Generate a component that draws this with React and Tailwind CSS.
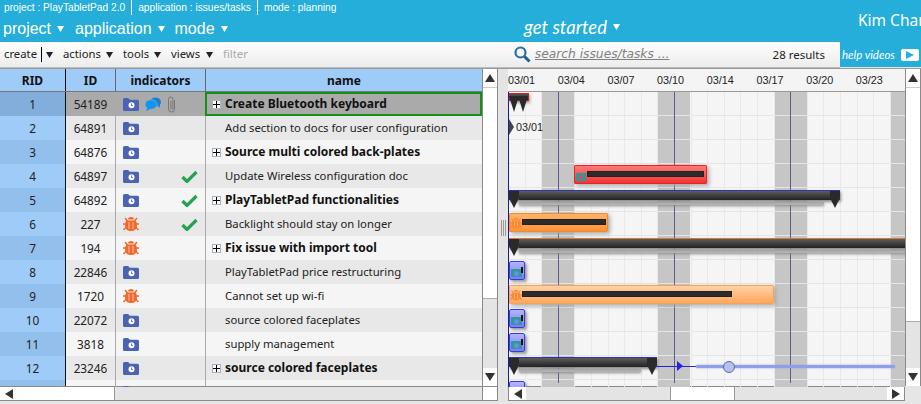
import React from "react";

const Caret = ({ className = "" }) => (
  <svg width="7" height="6" viewBox="0 0 7 6" className={`inline-block shrink-0 ${className}`}><path d="M0 0h7L3.5 6z" fill="currentColor" /></svg>
);

const Folder = () => (
  <svg width="16" height="13" viewBox="0 0 16 13" className="block">
    <path d="M0 1.5Q0 0 1.5 0H5l2 1.8h7.5Q16 1.8 16 3.3v8.2q0 1.5-1.5 1.5h-13Q0 13 0 11.5z" fill="#4a63b5" />
    <circle cx="8.5" cy="7.3" r="3" fill="#fff" />
    <path d="M8.5 5.5v2h1.4" stroke="#4a63b5" strokeWidth="0.9" fill="none" />
  </svg>
);

const Bug = ({ color = "#f4672b", stripe = "#fbc3a5", size = 16 }) => (
  <svg width={size} height={size} viewBox="0 0 16 16" className="block">
    <path d="M5 3.5Q5 1 8 1t3 2.5zM3.5 4.5h9Q14 6 14 9q0 6-6 6t-6-6q0-3 1.5-4.500z" fill={color} />
    <path d="M2 2l2.500 3M14 2l-2.500 3M0 8h3M16 8h-3M0.500 14l3-3M15.500 14l-3-3" stroke={color} strokeWidth="1.500" fill="none" />
    <path d="M6 6v7M10 6v7" stroke={stripe} strokeWidth="1" />
  </svg>
);

const Check = () => (
  <svg width="17" height="13" viewBox="0 0 17 13" className="block">
    <path d="M1.500 7l4.500 4.500L15.500 2" stroke="#25a24f" strokeWidth="3.200" fill="none" />
  </svg>
);

const Bubbles = () => (
  <svg width="16" height="14" viewBox="0 0 16 14" className="block">
    <ellipse cx="10.500" cy="5" rx="5.500" ry="4.500" fill="#1b7fd9" />
    <path d="M12 8l3 3-.5-5z" fill="#1b7fd9" />
    <ellipse cx="6" cy="7.500" rx="6" ry="4.800" fill="#0f95f7" stroke="#aaa" strokeWidth="0.700" />
    <path d="M2.500 10.500L1 14l5-2.500z" fill="#0f95f7" />
  </svg>
);

const Clip = () => (
  <svg width="9" height="17" viewBox="0 0 9 17" className="block">
    <path d="M7.500 4v9q0 3-3 3t-3-3V3.500q0-2.500 2.200-2.500t2.200 2.500V12q0 1-1 1t-1-1V5" stroke="#777" strokeWidth="1" fill="none" />
  </svg>
);

const Plus = () => (
  <span className="w-[9px] h-[9px] bg-white border border-[#a8b4c4] flex items-center justify-center shrink-0">
    <svg width="7" height="7" viewBox="0 0 7 7" className="block"><path d="M3.500 0v7M0 3.500h7" stroke="#000" strokeWidth="1" /></svg>
  </span>
);

const rows = [
  { rid: 1, id: 54189, icon: "f", extra: true, name: "Create Bluetooth keyboard", bold: true },
  { rid: 2, id: 64891, icon: "f", name: "Add section to docs for user configuration" },
  { rid: 3, id: 64876, icon: "f", name: "Source multi colored back-plates", bold: true },
  { rid: 4, id: 64897, icon: "f", check: true, name: "Update Wireless configuration doc" },
  { rid: 5, id: 64892, icon: "f", check: true, name: "PlayTabletPad functionalities", bold: true },
  { rid: 6, id: 227, icon: "b", check: true, name: "Backlight should stay on longer" },
  { rid: 7, id: 194, icon: "b", name: "Fix issue with import tool", bold: true },
  { rid: 8, id: 22846, icon: "f", name: "PlayTabletPad price restructuring" },
  { rid: 9, id: 1720, icon: "b", name: "Cannot set up wi-fi" },
  { rid: 10, id: 22072, icon: "f", name: "source colored faceplates" },
  { rid: 11, id: 3818, icon: "f", name: "supply management" },
  { rid: 12, id: 23246, icon: "f", name: "source colored faceplates", bold: true },
  { rid: 13, id: "", icon: "f", name: "" },
];

const Arrow = ({ dir }) => {
  const d = { up: "M0 8L5 0l5 8z", down: "M0 0h10L5 8z", left: "M8 0v10L0 5z", right: "M0 0v10l8-5z" }[dir];
  const horizontal = dir === "left" || dir === "right";
  return (
    <div className={`${horizontal ? "w-[17px] h-full" : "h-[18px] w-full"} bg-white flex items-center justify-center shrink-0`}>
      <svg width={horizontal ? 8 : 10} height={horizontal ? 10 : 8} className="block"><path d={d} fill="#333" /></svg>
    </div>
  );
};

const VScroll = ({ thumb }) => (
  <div className="w-[16px] h-full flex flex-col bg-[#e4e4e4] border-x border-[#8a8a8a] shrink-0">
    <Arrow dir="up" />
    <div className="bg-white border-t border-[#ccc] border-b border-b-[#aaa] shrink-0" style={{ height: thumb }} />
    <div className="flex-1" />
    <Arrow dir="down" />
  </div>
);

const days = ["03/01", "03/04", "03/07", "03/10", "03/14", "03/17", "03/20", "03/23"];
const DAY = 16.6;

const Summary = ({ left, top, width, border = "#2a35b0" }) => (
  <div className="absolute" style={{ left, top, width, height: 24 }}>
    <div className="absolute left-[10px] top-[13px] h-[3px] bg-[#b4b4b4] shadow-[0_1px_3px_#888]" style={{ width: width - 26 }} />
    <div className="absolute left-0 right-0 top-[1px] h-[10px] bg-gradient-to-b from-[#5e5e5e] to-[#222] border-t border-x shadow-[1px_2px_3px_#888]" style={{ borderColor: border }} />
    <div className="absolute left-[9px] top-[2px] w-px h-[9px] bg-[#666]" />
    <svg width="10" height="17" className="absolute left-0 top-[2px]"><path d="M0 0h10v7L5 17 0 7z" fill="#2a2a2a" /></svg>
    <svg width="10" height="17" className="absolute right-0 top-[2px]"><path d="M0 0h10v7L5 17 0 7z" fill="#2a2a2a" /></svg>
  </div>
);

const Bar = ({ left, top, width, inner, bg, border, children }) => (
  <div className={`absolute h-[19px] border rounded-[1px] shadow-[2px_2px_4px_#aaa] ${bg} ${border}`} style={{ left, top, width }}>
    {children}
    <div className="absolute left-[12px] top-[5px] h-[6px] bg-[#2c2c2c] border border-[#222]" style={{ width: inner }} />
  </div>
);

const BlueTask = ({ top, tall = 19 }) => (
  <div className="absolute left-0 w-[16px] bg-gradient-to-b from-[#b4b4fa] to-[#7c7cf2] border border-[#3a3ae4] rounded-[2px] shadow-[2px_2px_3px_#999]" style={{ top, height: tall }}>
    <div className="absolute left-[1px] top-[7px] w-[11px] h-[8px] bg-[#2a9aa0] flex items-center justify-center">
      <div className="w-[5px] h-[5px] rounded-full bg-[#6f8de0]" />
    </div>
    <div className="absolute right-[1px] top-[5px] w-[2px] h-[6px] bg-[#111]" />
  </div>
);

export default function App() {
  return (
    <div className="w-[921px] h-[404px] overflow-hidden flex flex-col bg-[#e6e6e6] text-[11.300px] text-[#222] font-['Noto_Sans','DejaVu_Sans',sans-serif]">
      {/* Blue header */}
      <div className="h-[42px] bg-[#24aed9] text-white flex justify-between shrink-0 overflow-hidden">
        <div className="pl-[4px] flex flex-col font-['Liberation_Sans',sans-serif] w-[360px] shrink-0">
          <div className="flex items-center h-[15px] text-[10.200px] leading-[15px] whitespace-nowrap">
            <span>project : PlayTabletPad 2.0</span>
            <span className="w-px h-[15px] bg-white mx-[6px] shrink-0" />
            <span>application : issues/tasks</span>
            <span className="w-px h-[15px] bg-white mx-[6px] shrink-0" />
            <span>mode : planning</span>
          </div>
          <div className="flex items-center mt-[2px] -ml-[1px] text-[16px] leading-[23px]">
            <span>project</span><Caret className="ml-[6px] mr-[11px]" />
            <span>application</span><Caret className="ml-[6px] mr-[10px]" />
            <span>mode</span><Caret className="ml-[6px]" />
          </div>
        </div>
        <div className="flex-1 flex items-start">
          <div className="ml-[164px] mt-[15px] flex items-center text-[18.500px] leading-[24px] italic font-['Lato',sans-serif] whitespace-nowrap">
            get started<Caret className="ml-[6px]" />
          </div>
          <div className="ml-auto mt-[9px] text-[15.500px] leading-[22px] whitespace-nowrap w-[63px] overflow-hidden">Kim Chan</div>
        </div>
      </div>

      {/* Toolbar */}
      <div className="h-[26px] flex shrink-0">
        <div className="flex-1 flex items-center bg-gradient-to-b from-white to-[#ececec] border-b border-b-[#bbb] pl-[4px] text-[#222] whitespace-nowrap">
          <span className="w-[37px]">create</span>
          <span className="w-px h-[15px] bg-black" />
          <Caret className="ml-[4px]" />
          <span className="ml-[10px] w-[43px]">actions</span><Caret />
          <span className="ml-[10px] w-[31px]">tools</span><Caret />
          <span className="ml-[10px] w-[35px]">views</span><Caret />
          <span className="ml-[10px] text-[#aaa]">filter</span>
          <svg width="17" height="17" viewBox="0 0 17 17" className="ml-[266px] mr-[4px] block shrink-0">
            <circle cx="6.500" cy="6.500" r="5" stroke="#2a6da8" strokeWidth="2.200" fill="none" />
            <path d="M10.500 10.500l5 5" stroke="#1f5f97" strokeWidth="3" />
          </svg>
          <span className="italic underline text-[#808080] text-[12.250px] font-['DejaVu_Sans',sans-serif]">search issues/tasks ...</span>
          <span className="ml-auto mr-[15px] text-[#222] text-[11.500px]">28 results</span>
        </div>
        <div className="w-[81px] bg-[#24aed9] h-[25px] text-white flex items-center pl-[2px] text-[11.500px] italic font-['Lato',sans-serif] whitespace-nowrap">
          help videos
          <span className="ml-[6px] w-[18px] h-[12px] bg-white rounded-[2px] flex items-center justify-center">
            <svg width="8" height="8" className="block"><path d="M0 0l8 4-8 4z" fill="#24aed9" /></svg>
          </span>
        </div>
      </div>

      {/* Main */}
      <div className="h-[334px] flex shrink-0 border-t border-[#999]">
        {/* Table */}
        <div className="w-[498px] h-full flex flex-col shrink-0">
          <div className="flex-1 min-h-0 flex">
            <div className="w-[482px] h-[318px] overflow-hidden">
              <div className="flex h-[23px] bg-[#9fcbf8] font-bold text-[12px] text-[#111] border-b border-[#777]">
                <div className="w-[65px] text-center leading-[23px]">RID</div>
                <div className="w-[50px] text-center leading-[23px] border-l border-[#111]">ID</div>
                <div className="w-[90px] text-center leading-[23px] border-l border-[#667]">indicators</div>
                <div className="flex-1 text-center leading-[23px] border-l border-[#667]">name</div>
              </div>
              {rows.map((r) => {
                const sel = r.rid === 1;
                const even = r.rid % 2 === 0;
                return (
                  <div key={r.rid} className={`flex h-[24px] ${sel ? "bg-[#aaaaaa]" : even ? "bg-[#e8e8e8]" : "bg-[#f5f5f5]"}`}>
                    <div className={`w-[65px] text-center text-[11.800px] leading-[24px] ${sel ? "bg-[#83aedb]" : even ? "bg-[#9fcbf8]" : "bg-[#93bfec]"}`}>{r.rid}</div>
                    <div className="w-[50px] text-center text-[11.800px] leading-[24px] border-l border-[#111]">{r.id}</div>
                    <div className="w-[90px] border-l border-[#aaa] flex items-center pl-[7px] relative">
                      {r.icon === "f" ? <Folder /> : <Bug />}
                      {r.extra && <span className="ml-[6px]"><Bubbles /></span>}
                      {r.extra && <span className="ml-[6px]"><Clip /></span>}
                      {r.check && <span className="ml-auto mr-[7px]"><Check /></span>}
                    </div>
                    <div className={`flex-1 flex items-center whitespace-nowrap ${sel ? "border-2 border-[#159017] pl-[5px]" : "border-l border-[#aaa] pl-[6px]"} ${r.bold ? "font-bold text-[12px] text-[#111]" : ""}`}>
                      <span className="w-[13px] shrink-0">{r.bold && <Plus />}</span>
                      <span>{r.name}</span>
                    </div>
                  </div>
                );
              })}
            </div>
            <VScroll thumb={212} />
          </div>
          <div className="h-[15px] flex bg-[#e4e4e4] border-y border-[#8a8a8a] shrink-0 mb-[1px]">
            <Arrow dir="left" />
            <div className="w-[98px] bg-white border-r border-[#999]" />
            <div className="flex-1" />
            <div className="w-[16px] bg-white border-x border-[#8a8a8a]" />
          </div>
        </div>

        {/* Splitter */}
        <div className="w-[10px] h-full flex items-center justify-center bg-[#e4e4e4] shrink-0">
          <div className="w-[5px] h-[16px] mb-[16px] border-x border-[#999] flex justify-center"><div className="w-px bg-[#999]" /></div>
        </div>

        {/* Gantt */}
        <div className="w-[413px] h-full flex flex-col">
          <div className="flex-1 min-h-0 flex">
            <div className="w-[397px] h-[318px] flex flex-col overflow-hidden bg-[#f5f5f5]">
              <div className="h-[23px] flex bg-[#f4f4f4] border-b border-[#999] shrink-0 text-[#222] text-[10.800px] font-['Liberation_Sans',sans-serif]">
                {days.map((d) => (
                  <div key={d} className="w-[49.700px] leading-[23px] shrink-0">{d}</div>
                ))}
              </div>
              <div className="relative flex-1 border-l border-[#1a1a9a] overflow-hidden bg-[repeating-linear-gradient(to_right,transparent_0,transparent_15.600px,#e9e9e9_15.600px,#e9e9e9_16.600px)]">
                {[2, 9, 16, 23].map((k) => (
                  <div key={k} className="absolute top-0 bottom-0 w-[32px] bg-[#c6c6c6]" style={{ left: k * DAY }} />
                ))}
                <div className="absolute inset-0 bg-[repeating-linear-gradient(to_bottom,transparent_0,transparent_23px,#e6e6e6_23px,#e6e6e6_24px)]" />
                {[3, 10, 17].map((k) => (
                  <div key={k} className="absolute top-0 bottom-[4px] w-px bg-[#5d5d8c]" style={{ left: k * DAY - 1 }} />
                ))}
                {/* Row 1 */}
                <div className="absolute left-0 top-[1px] w-[20px] h-[8px] border border-[#e01818] bg-gradient-to-b from-[#555] to-[#222] shadow-[1px_2px_3px_#999]" />
                <svg width="20" height="20" className="absolute left-0 top-[2px]"><path d="M0 2h10L5 18zM9 2h10L14 18z" fill="#2a2a2a" /></svg>
                {/* Row 2 */}
                <svg width="6" height="16" className="absolute left-0 top-[27px]"><path d="M0 0l5 8-5 8z" fill="#444" /></svg>
                <span className="absolute left-[7px] top-[27px] text-[10.800px] leading-[17px] font-['Liberation_Sans',sans-serif]">03/01</span>
                {/* Row 4 */}
                <Bar left={65} top={73} width={133} inner={117} bg="bg-gradient-to-b from-[#f77] to-[#ee3535]" border="border-[#e22]">
                  <div className="absolute left-[1px] top-[7px] w-[10px] h-[8px] bg-[#2a9aa0]"><div className="w-[4px] h-[4px] mt-[2px] ml-[3px] rounded-full bg-[#e44]" /></div>
                </Bar>
                {/* Row 5 */}
                <Summary left={0} top={97} width={331} />
                {/* Row 6 */}
                <Bar left={0} top={121} width={99} inner={84} bg="bg-gradient-to-b from-[#ffb36b] to-[#ff9432]" border="border-[#f08a2e]">
                  <div className="absolute left-[0px] top-[3px]"><Bug color="#f78a32" stripe="#ffb36b" size={12} /></div>
                </Bar>
                {/* Row 7 */}
                <Summary left={0} top={145} width={420} border="#d9772e" />
                {/* Row 8 */}
                <BlueTask top={169} />
                {/* Row 9 */}
                <Bar left={0} top={193} width={265} inner={210} bg="bg-gradient-to-b from-[#ffd0a4] to-[#ffa75c]" border="border-[#f4a25a]">
                  <div className="absolute left-[0px] top-[3px]"><Bug color="#f78a32" stripe="#ffc08a" size={12} /></div>
                </Bar>
                {/* Rows 10, 11 */}
                <BlueTask top={217} />
                <BlueTask top={241} />
                {/* Row 12 */}
                <Summary left={0} top={264} width={148} />
                <div className="absolute left-[148px] top-[274px] w-[40px] h-px bg-[#2222e0]" />
                <svg width="6" height="10" className="absolute left-[168px] top-[269px]"><path d="M0 0l6 5-6 5z" fill="#2222e0" /></svg>
                <div className="absolute left-[187px] top-[273px] w-[199px] h-[3px] rounded bg-[#8f9fe8] shadow-[0_0_2px_#8f9fe8]" />
                <div className="absolute left-[214px] top-[269px] w-[12px] h-[12px] rounded-full bg-[#b4c2ec] border border-[#5a6aaa]" />
                {/* Row 13 */}
                <BlueTask top={289} tall={20} />
              </div>
            </div>
            <VScroll thumb={235} />
          </div>
          <div className="h-[15px] mb-[1px] flex shrink-0">
            <div className="w-[397px] flex bg-[#e4e4e4] border border-[#8a8a8a]">
              <Arrow dir="left" />
              <div className="w-[144px]" />
              <div className="w-[65px] bg-white border-x border-[#999]" />
              <div className="flex-1" />
              <Arrow dir="right" />
            </div>
          </div>
        </div>
      </div>
    </div>
  );
}
